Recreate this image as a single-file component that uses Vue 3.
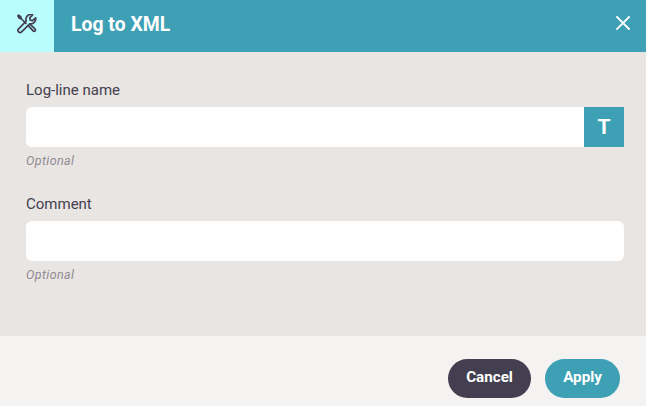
<script setup>
const fields = [{ label: 'Log-line name', addon: true }, { label: 'Comment', addon: false }]
</script>

<template>
  <div class="dialog">
    <header class="head">
      <div class="tile">
        <svg width="20" height="20" viewBox="0 0 20 20" fill="none" stroke="#433f50" stroke-width="1.7" stroke-linecap="round" stroke-linejoin="round">
          <path d="M18.6 3.8 15.6 6.7l-2.400-.5-.5-2.400 2.900-3a5 5 0 0 0-6.400 6.400L1.600 14.900a2.100 2.100 0 0 0 3 3l8.100-8.100a5 5 0 0 0 5.900-6z" />
          <path d="M9 9.500 4.500 5l-1-2.600-2-1.200-.6.600 1.100 2.100 2.500 1.100M11.500 11.800l5.100 5.500a1.500 1.500 0 0 0 1.800-1.900l-5.300-5.200" />
        </svg>
      </div>
      <h1 class="title">Log to XML</h1>
      <button class="close" aria-label="Close">
        <svg width="14" height="14" viewBox="0 0 14 14" stroke="#fff" stroke-width="1.8" stroke-linecap="square"><path d="M1 1l12 12M13 1L1 13" /></svg>
      </button>
    </header>
    <main class="body">
      <div v-for="f in fields" :key="f.label" class="field">
        <label class="label">{{ f.label }}</label>
        <div class="control">
          <input class="input" :class="{ joined: f.addon }" type="text" />
          <span v-if="f.addon" class="addon">T</span>
        </div>
        <small class="hint">Optional</small>
      </div>
    </main>
    <footer class="foot">
      <button class="btn cancel">Cancel</button>
      <button class="btn apply">Apply</button>
    </footer>
  </div>
</template>

<style>
html, body { margin: 0; }
</style>
<style scoped>
.dialog { width: 646px; height: 406px; display: flex; flex-direction: column; font-family: Roboto, sans-serif; color: #433f50; background: #e9e5e2; }
.head { height: 52px; flex: none; display: flex; align-items: center; background: #3da0b5; color: #fff; }
.tile { width: 54px; height: 52px; box-sizing: border-box; padding-bottom: 4px; display: flex; align-items: center; justify-content: center; background: #b9fdff; }
.title { flex: 1; margin: 0 0 3px 17px; font-size: 19.4px; font-weight: 700; }
.close { width: 46px; height: 46px; border: 0; padding: 0; margin-bottom: 6px; background: none; display: flex; align-items: center; justify-content: center; }
.body { flex: 1; padding: 29px 22px 0 26px; }
.field { margin-bottom: 27px; }
.label { display: block; font-size: 15px; line-height: 18px; margin-bottom: 8px; }
.control { display: flex; height: 40px; }
.input { flex: 1; min-width: 0; border: 0; border-radius: 6px; background: #fff; padding: 0 10px; outline: none; }
.input.joined { border-radius: 6px 0 0 6px; }
.addon { width: 40px; display: flex; align-items: center; justify-content: center; background: #3da0b5; color: #fff; font-size: 21px; font-weight: 700; }
.hint { display: block; margin-top: 7px; font-size: 12.5px; line-height: 14px; font-style: italic; color: #8f8a93; letter-spacing: .4px; }
.foot { height: 70px; flex: none; box-sizing: border-box; padding: 0 26px 8px 0; display: flex; align-items: flex-end; justify-content: flex-end; gap: 14px; background: #f4f3f1; }
.btn { height: 39px; border: 0; padding: 0 0 4px; border-radius: 20px; color: #fff; font: 700 15.2px Roboto, sans-serif; }
.cancel { width: 83px; background: #433f50; }
.apply { width: 75px; background: #3da0b5; }
</style>
